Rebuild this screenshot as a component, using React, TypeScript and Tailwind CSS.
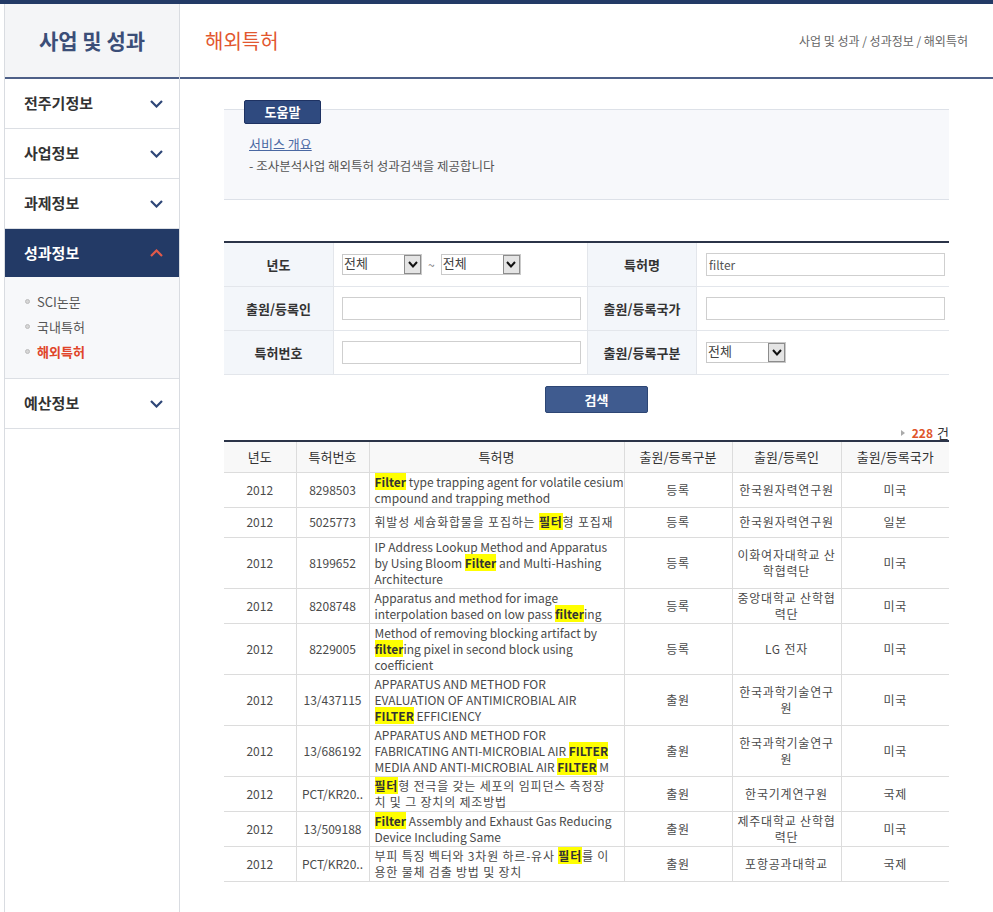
import React from "react";

type Seg = string | { h: string };
type Row = {
  no: string;
  title: Seg[][];
  kind: string;
  app: string[];
  country: string;
};

const rows: Row[] = [
  {
    no: "8298503",
    title: [[{ h: "Filter" }, " type trapping agent for volatile cesium"], ["cmpound and trapping method"]],
    kind: "등록",
    app: ["한국원자력연구원"],
    country: "미국",
  },
  {
    no: "5025773",
    title: [["휘발성 세슘화합물을 포집하는 ", { h: "필터" }, "형 포집재"]],
    kind: "등록",
    app: ["한국원자력연구원"],
    country: "일본",
  },
  {
    no: "8199652",
    title: [
      ["IP Address Lookup Method and Apparatus"],
      ["by Using Bloom ", { h: "Filter" }, " and Multi-Hashing"],
      ["Architecture"],
    ],
    kind: "등록",
    app: ["이화여자대학교 산", "학협력단"],
    country: "미국",
  },
  {
    no: "8208748",
    title: [["Apparatus and method for image"], ["interpolation based on low pass ", { h: "filter" }, "ing"]],
    kind: "등록",
    app: ["중앙대학교 산학협", "력단"],
    country: "미국",
  },
  {
    no: "8229005",
    title: [
      ["Method of removing blocking artifact by"],
      [{ h: "filter" }, "ing pixel in second block using"],
      ["coefficient"],
    ],
    kind: "등록",
    app: ["LG 전자"],
    country: "미국",
  },
  {
    no: "13/437115",
    title: [["APPARATUS AND METHOD FOR"], ["EVALUATION OF ANTIMICROBIAL AIR"], [{ h: "FILTER" }, " EFFICIENCY"]],
    kind: "출원",
    app: ["한국과학기술연구", "원"],
    country: "미국",
  },
  {
    no: "13/686192",
    title: [
      ["APPARATUS AND METHOD FOR"],
      ["FABRICATING ANTI-MICROBIAL AIR ", { h: "FILTER" }],
      ["MEDIA AND ANTI-MICROBIAL AIR ", { h: "FILTER" }, " M"],
    ],
    kind: "출원",
    app: ["한국과학기술연구", "원"],
    country: "미국",
  },
  {
    no: "PCT/KR20..",
    title: [[{ h: "필터" }, "형 전극을 갖는 세포의 임피던스 측정장"], ["치 및 그 장치의 제조방법"]],
    kind: "출원",
    app: ["한국기계연구원"],
    country: "국제",
  },
  {
    no: "13/509188",
    title: [[{ h: "Filter" }, " Assembly and Exhaust Gas Reducing"], ["Device Including Same"]],
    kind: "출원",
    app: ["제주대학교 산학협", "력단"],
    country: "미국",
  },
  {
    no: "PCT/KR20..",
    title: [["부피 특징 벡터와 3차원 하르-유사 ", { h: "필터" }, "를 이"], ["용한 물체 검출 방법 및 장치"]],
    kind: "출원",
    app: ["포항공과대학교"],
    country: "국제",
  },
];

function Chevron({ up, color }: { up?: boolean; color: string }) {
  return (
    <svg width="13" height="8" viewBox="0 0 13 8">
      <polyline
        points={up ? "1,7 6.5,1.5 12,7" : "1,1 6.5,6.5 12,1"}
        fill="none"
        stroke={color}
        strokeWidth="2.2"
      />
    </svg>
  );
}

function SelectBox({ w }: { w: string }) {
  return (
    <div className={`${w} h-[21px] border border-[#c9c9c9] bg-white flex items-stretch justify-between`}>
      <span className="pl-[1px] leading-[16px] text-[13px] text-[#444]">전체</span>
      <span className="w-[17px] bg-[#e4e4e4] border border-[#8c8c8c] flex items-center justify-center">
        <svg width="10" height="7" viewBox="0 0 10 7">
          <polyline points="1,1 5,5.5 9,1" fill="none" stroke="#111" strokeWidth="2" />
        </svg>
      </span>
    </div>
  );
}

function TextInput({ value }: { value?: string }) {
  return (
    <div className="h-[23px] border border-[#cfcfcf] bg-white pl-[2px] text-[12px] leading-[21px] text-[#555]">
      {value}
    </div>
  );
}

function Line({ segs }: { segs: Seg[] }) {
  const text = segs.map((s) => (typeof s === "string" ? s : s.h)).join("");
  const ko = /[가-힣]/.test(text);
  return (
    <div className={`whitespace-nowrap ${ko ? "tracking-[0.8px]" : ""}`}>
      {segs.map((s, i) =>
        typeof s === "string" ? (
          <span key={i}>{s}</span>
        ) : (
          <span key={i} className="bg-[#ffff00] font-bold text-[#333]">
            {s.h}
          </span>
        )
      )}
    </div>
  );
}

const menu = ["전주기정보", "사업정보", "과제정보"];

const label =
  "bg-[#f3f6fa] border-r border-[#e3e6eb] flex items-center justify-center text-[13px] font-bold text-[#333]";

export default function App() {
  return (
    <div className="min-h-[912px] w-[993px] bg-white font-['Noto_Sans_CJK_KR',sans-serif] text-[#444]">
      <div className="h-[4px] bg-[#233a66]" />
      <div className="flex pl-[4px]">
        {/* Sidebar */}
        <aside className="w-[176px] shrink-0 border-x border-[#d9dce1] min-h-[908px] flex flex-col">
          <div className="h-[75px] bg-[#f4f5f7] border-b-2 border-[#4e6088] flex items-center justify-center">
            <span className="text-[21px] font-bold text-[#3b4e78]">사업 및 성과</span>
          </div>
          {menu.map((m) => (
            <div
              key={m}
              className="h-[50px] border-b border-[#dcdfe4] flex items-center justify-between pl-[19px] pr-[16px]"
            >
              <span className="text-[15px] font-bold text-[#333]">{m}</span>
              <Chevron color="#2e4677" />
            </div>
          ))}
          <div className="h-[48px] bg-[#233a66] flex items-center justify-between pl-[19px] pr-[16px]">
            <span className="text-[15px] font-bold text-white">성과정보</span>
            <Chevron up color="#e25a4a" />
          </div>
          <div className="h-[102px] bg-[#f7f8fa] border-b border-[#dcdfe4] pt-[12px] pl-[20px]">
            {[
              { t: "SCI논문", a: false },
              { t: "국내특허", a: false },
              { t: "해외특허", a: true },
            ].map((s) => (
              <div key={s.t} className="flex items-center gap-[7px] leading-[25px]">
                <span className="w-[5px] h-[5px] rounded-full bg-[#d6d6d6] border border-[#bdbdbd]" />
                <span
                  className={
                    s.a ? "text-[13px] font-bold text-[#e0452a]" : "text-[13px] text-[#555]"
                  }
                >
                  {s.t}
                </span>
              </div>
            ))}
          </div>
          <div className="h-[50px] border-b border-[#dcdfe4] flex items-center justify-between pl-[19px] pr-[16px]">
            <span className="text-[15px] font-bold text-[#333]">예산정보</span>
            <Chevron color="#2e4677" />
          </div>
        </aside>

        {/* Main */}
        <main className="flex-1">
          <div className="h-[75px] border-b-2 border-[#4e6088] flex items-center justify-between pl-[25px] pr-[25px]">
            <span className="text-[20px] text-[#e2572f]">해외특허</span>
            <span className="text-[12px] text-[#666]">사업 및 성과 / 성과정보 / 해외특허</span>
          </div>

          <div className="px-[44px] pt-[21px]">
            {/* Help */}
            <div className="relative z-10 ml-[20px] w-[77px] h-[24px] bg-[#2f4a7f] border border-[#1e3262] rounded-[2px] flex items-center justify-center">
              <span className="text-[13px] font-bold text-white">도움말</span>
            </div>
            <div className="-mt-[15px] h-[91px] bg-[#f7f8fb] border-y border-[#dde1e8] pt-[23px] pl-[25px]">
              <div className="leading-[22px] text-[13px] text-[#4a68a3] underline">서비스 개요</div>
              <div className="leading-[22px] text-[12.5px] text-[#555]">
                - 조사분석사업 해외특허 성과검색을 제공합니다
              </div>
            </div>

            {/* Search form */}
            <div className="mt-[41px] border-t-2 border-[#2b3448]">
              <div className="grid grid-cols-[110px_254px_109px_252px] h-[44px] border-b border-[#e3e6eb]">
                <div className={label}>년도</div>
                <div className="border-r border-[#e3e6eb] flex items-center pl-[8px] gap-[6px]">
                  <SelectBox w="w-[80px]" />
                  <span className="text-[12px] text-[#777]">~</span>
                  <SelectBox w="w-[80px]" />
                </div>
                <div className={label}>특허명</div>
                <div className="flex items-center pl-[9px] pr-[4px]">
                  <div className="w-full">
                    <TextInput value="filter" />
                  </div>
                </div>
              </div>
              <div className="grid grid-cols-[110px_254px_109px_252px] h-[44px] border-b border-[#e3e6eb]">
                <div className={label}>출원/등록인</div>
                <div className="border-r border-[#e3e6eb] flex items-center pl-[8px] pr-[6px]">
                  <div className="w-full">
                    <TextInput />
                  </div>
                </div>
                <div className={label}>출원/등록국가</div>
                <div className="flex items-center pl-[9px] pr-[4px]">
                  <div className="w-full">
                    <TextInput />
                  </div>
                </div>
              </div>
              <div className="grid grid-cols-[110px_254px_109px_252px] h-[44px] border-b border-[#e3e6eb]">
                <div className={label}>특허번호</div>
                <div className="border-r border-[#e3e6eb] flex items-center pl-[8px] pr-[6px]">
                  <div className="w-full">
                    <TextInput />
                  </div>
                </div>
                <div className={label}>출원/등록구분</div>
                <div className="flex items-center pl-[9px]">
                  <SelectBox w="w-[80px]" />
                </div>
              </div>
            </div>

            <div className="mt-[11px] ml-[321px] w-[103px] h-[27px] bg-[#3f5b8f] border border-[#2d4674] rounded-[2px] flex items-center justify-center">
              <span className="text-[13px] font-bold text-white">검색</span>
            </div>

            <div className="mt-[12px] h-[15px] flex items-center justify-end gap-[4px] leading-[15px]">
              <svg width="4" height="6" viewBox="0 0 4 6">
                <polygon points="0,0 4,3 0,6" fill="#aaa" />
              </svg>
              <span className="text-[12px] font-bold text-[#e0552b] ml-[3px]">228</span>
              <span className="text-[13px] text-[#333]">건</span>
            </div>

            {/* Results */}
            <div className="border-t-2 border-[#2b3448]">
              <table className="w-full table-fixed border-collapse text-[12px] leading-[16px]">
                <colgroup>
                  <col className="w-[72px]" />
                  <col className="w-[73px]" />
                  <col className="w-[255px]" />
                  <col className="w-[108px]" />
                  <col className="w-[109px]" />
                  <col className="w-[108px]" />
                </colgroup>
                <thead>
                  <tr className="h-[30px] bg-[#f8f8f8] text-[#333] text-[13px]">
                    <th className="font-normal border-b border-r border-[#dcdcdc]">년도</th>
                    <th className="font-normal border-b border-r border-[#dcdcdc]">특허번호</th>
                    <th className="font-normal border-b border-r border-[#dcdcdc]">특허명</th>
                    <th className="font-normal border-b border-r border-[#dcdcdc]">출원/등록구분</th>
                    <th className="font-normal border-b border-r border-[#dcdcdc]">출원/등록인</th>
                    <th className="font-normal border-b border-[#dcdcdc]">출원/등록국가</th>
                  </tr>
                </thead>
                <tbody className="text-[#4a4a4a]">
                  {rows.map((r, i) => (
                    <tr key={i} className="h-[30px]">
                      <td className="text-center border-b border-r border-[#dcdcdc]">2012</td>
                      <td className="text-center border-b border-r border-[#dcdcdc] whitespace-nowrap overflow-hidden">
                        {r.no}
                      </td>
                      <td className="text-left pl-[5px] pr-[1px] py-[1px] border-b border-r border-[#dcdcdc] overflow-hidden">
                        {r.title.map((l, j) => (
                          <Line key={j} segs={l} />
                        ))}
                      </td>
                      <td className="text-center tracking-[0.8px] border-b border-r border-[#dcdcdc]">{r.kind}</td>
                      <td className="text-center tracking-[0.8px] border-b border-r border-[#dcdcdc] overflow-hidden">
                        {r.app.map((a, j) => (
                          <div key={j} className="whitespace-nowrap">
                            {a}
                          </div>
                        ))}
                      </td>
                      <td className="text-center tracking-[0.8px] border-b border-[#dcdcdc]">{r.country}</td>
                    </tr>
                  ))}
                </tbody>
              </table>
            </div>
          </div>
        </main>
      </div>
    </div>
  );
}
